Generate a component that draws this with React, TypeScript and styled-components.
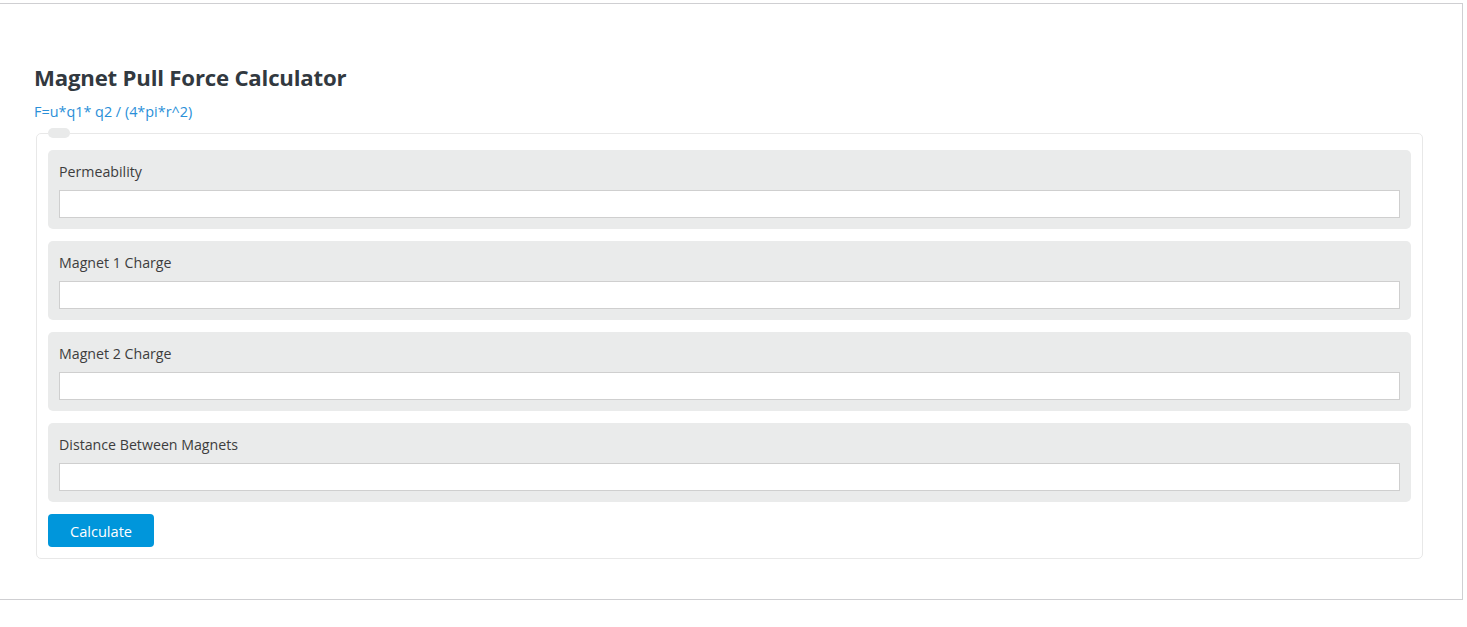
import styled, { createGlobalStyle } from "styled-components";

const GlobalStyle = createGlobalStyle`
  html, body {
    margin: 0;
    padding: 0;
    background: #ffffff;
  }
  body {
    font-family: "Open Sans", "Noto Sans", "Liberation Sans", sans-serif;
    color: #333a40;
  }
`;

const Frame = styled.div`
  box-sizing: border-box;
  margin-top: 3px;
  width: 1463px;
  height: 597px;
  border: 1px solid #cfcfd2;
  border-left: none;
  padding: 59px 37px 0 34px;
  display: flex;
  flex-direction: column;
`;

const Title = styled.h2`
  margin: 0;
  font-size: 22.2px;
  line-height: 30px;
  font-weight: 700;
  color: #323940;
  letter-spacing: -0.2px;
`;

const Formula = styled.div`
  margin-top: 9px;
  font-size: 14.4px;
  line-height: 20px;
  color: #2a8fd8;
`;

const Fieldset = styled.fieldset`
  margin: 6px 2px 0 2px;
  padding: 12px 11px 11px 11px;
  border: 1px solid #e8e8e8;
  border-radius: 5px;
  display: flex;
  flex-direction: column;
  gap: 12px;
  min-width: 0;
`;

const Legend = styled.legend`
  width: 22px;
  height: 10px;
  padding: 0;
  margin: 0;
  border-radius: 6px;
  background: #e9eaea;
`;

const Group = styled.div`
  background: #eaebeb;
  border-radius: 5px;
  padding: 12px 11px 11px 11px;
  display: flex;
  flex-direction: column;
  gap: 8px;
`;

const Label = styled.label`
  font-size: 14.2px;
  line-height: 20px;
  color: #3d3d3d;
`;

const Input = styled.input`
  box-sizing: border-box;
  height: 28px;
  width: 100%;
  margin: 0;
  border: 1px solid #cfcfcf;
  background: #ffffff;
  outline: none;
  padding: 0 8px;
  font: inherit;
`;

const Button = styled.button`
  align-self: flex-start;
  width: 106px;
  height: 33px;
  border: none;
  border-radius: 4px;
  background: #0096db;
  color: #ffffff;
  font-family: inherit;
  font-size: 14.6px;
  cursor: pointer;
`;

const fields = [
  "Permeability",
  "Magnet 1 Charge",
  "Magnet 2 Charge",
  "Distance Between Magnets",
];

export default function App() {
  return (
    <>
      <GlobalStyle />
      <Frame>
        <Title>Magnet Pull Force Calculator</Title>
        <Formula>F=u*q1* q2 / (4*pi*r^2)</Formula>
        <Fieldset>
          <Legend />
          {fields.map((f) => (
            <Group key={f}>
              <Label>{f}</Label>
              <Input type="text" />
            </Group>
          ))}
          <Button>Calculate</Button>
        </Fieldset>
      </Frame>
    </>
  );
}
